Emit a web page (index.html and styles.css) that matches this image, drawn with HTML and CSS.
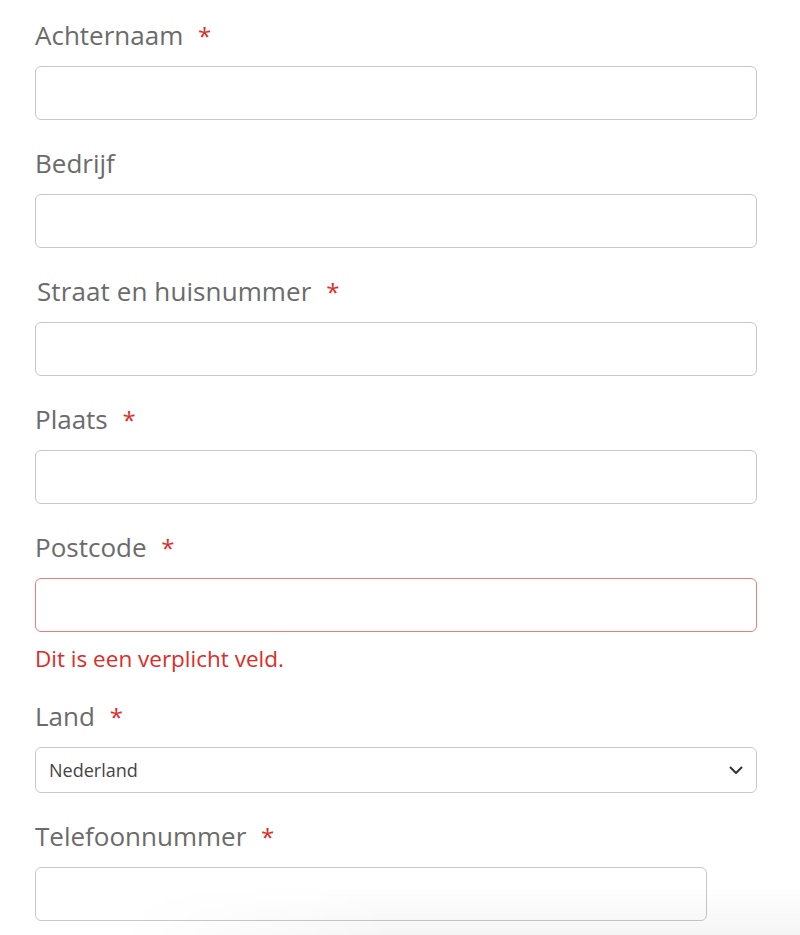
FILE: index.html
```html
<!DOCTYPE html>
<html lang="nl">
<head>
  <meta charset="UTF-8" />
  <meta name="viewport" content="width=device-width, initial-scale=1.0"/>
  <title>Adresgegevens</title>
  <link rel="stylesheet" href="styles.css">
</head>
<body>

<!-- ADDRESS FORM -->
<form class="address-form" novalidate>
  <div class="field">
    <label for="lastname">Achternaam <span class="req">*</span></label>
    <input type="text" id="lastname" class="input" />
  </div>

  <div class="field">
    <label for="company">Bedrijf</label>
    <input type="text" id="company" class="input" />
  </div>

  <div class="field">
    <label for="street" class="label-indent">Straat en huisnummer <span class="req">*</span></label>
    <input type="text" id="street" class="input" />
  </div>

  <div class="field">
    <label for="city">Plaats <span class="req">*</span></label>
    <input type="text" id="city" class="input" />
  </div>

  <div class="field has-error">
    <label for="postcode">Postcode <span class="req">*</span></label>
    <input type="text" id="postcode" class="input" />
    <div class="error">Dit is een verplicht veld.</div>
  </div>

  <div class="field">
    <label for="country">Land <span class="req">*</span></label>
    <div class="select-wrap">
      <select id="country" class="select">
        <option>Nederland</option>
        <option>België</option>
        <option>Duitsland</option>
      </select>
      <svg class="chevron" width="14" height="9" viewBox="0 0 14 9" aria-hidden="true">
        <polyline points="1.5,1.5 7,7 12.5,1.5" fill="none" stroke="#333" stroke-width="2" stroke-linecap="round" stroke-linejoin="round"/>
      </svg>
    </div>
  </div>

  <div class="field">
    <label for="phone">Telefoonnummer <span class="req">*</span></label>
    <input type="tel" id="phone" class="input input-short" />
  </div>
</form>

</body>
</html>
```

FILE: styles.css
```css
body {
  margin: 0;
  padding: 19px 0 0 35px;
  font-family: 'Open Sans', 'Liberation Sans', sans-serif;
  background: #fff;
  color: #666;
}

/* faint shading at the bottom edge */
body::after {
  content: '';
  position: fixed;
  left: 120px;
  right: 0;
  bottom: 0;
  height: 48px;
  background: linear-gradient(to bottom, rgba(0, 0, 0, 0), rgba(0, 0, 0, 0.04));
  -webkit-mask-image: linear-gradient(to right, transparent, #000 40%);
  mask-image: linear-gradient(to right, transparent, #000 40%);
  pointer-events: none;
}

.address-form {
  width: 722px;
}

.field {
  margin-bottom: 27px;
}

.field label {
  display: block;
  font-size: 26px;
  line-height: 32px;
  margin-bottom: 15px;
  color: #6b6b6b;
}

.label-indent {
  padding-left: 2px;
  letter-spacing: 0.1px;
}

.req {
  color: #e02b27;
  font-size: 24px;
  line-height: 1;
  margin-left: 8px;
}

.input {
  display: block;
  width: 100%;
  height: 54px;
  box-sizing: border-box;
  border: 1px solid #c9c9c9;
  border-radius: 6px;
  padding: 0 14px;
  font-family: inherit;
  font-size: 18px;
  background: #fff;
  outline: none;
}

.input-short {
  width: 672px;
}

.has-error .input {
  border-color: #ec7b7d;
}

.error {
  margin-top: 13px;
  font-size: 22.5px;
  line-height: 28px;
  color: #e02b27;
}

.select-wrap {
  position: relative;
}

.select {
  display: block;
  width: 100%;
  height: 46px;
  box-sizing: border-box;
  border: 1px solid #c9c9c9;
  border-radius: 6px;
  padding: 0 40px 0 13px;
  font-family: inherit;
  font-size: 18px;
  color: #444;
  background: #fff;
  -webkit-appearance: none;
  appearance: none;
  outline: none;
}

.chevron {
  position: absolute;
  right: 14px;
  top: 19px;
  pointer-events: none;
}
```
